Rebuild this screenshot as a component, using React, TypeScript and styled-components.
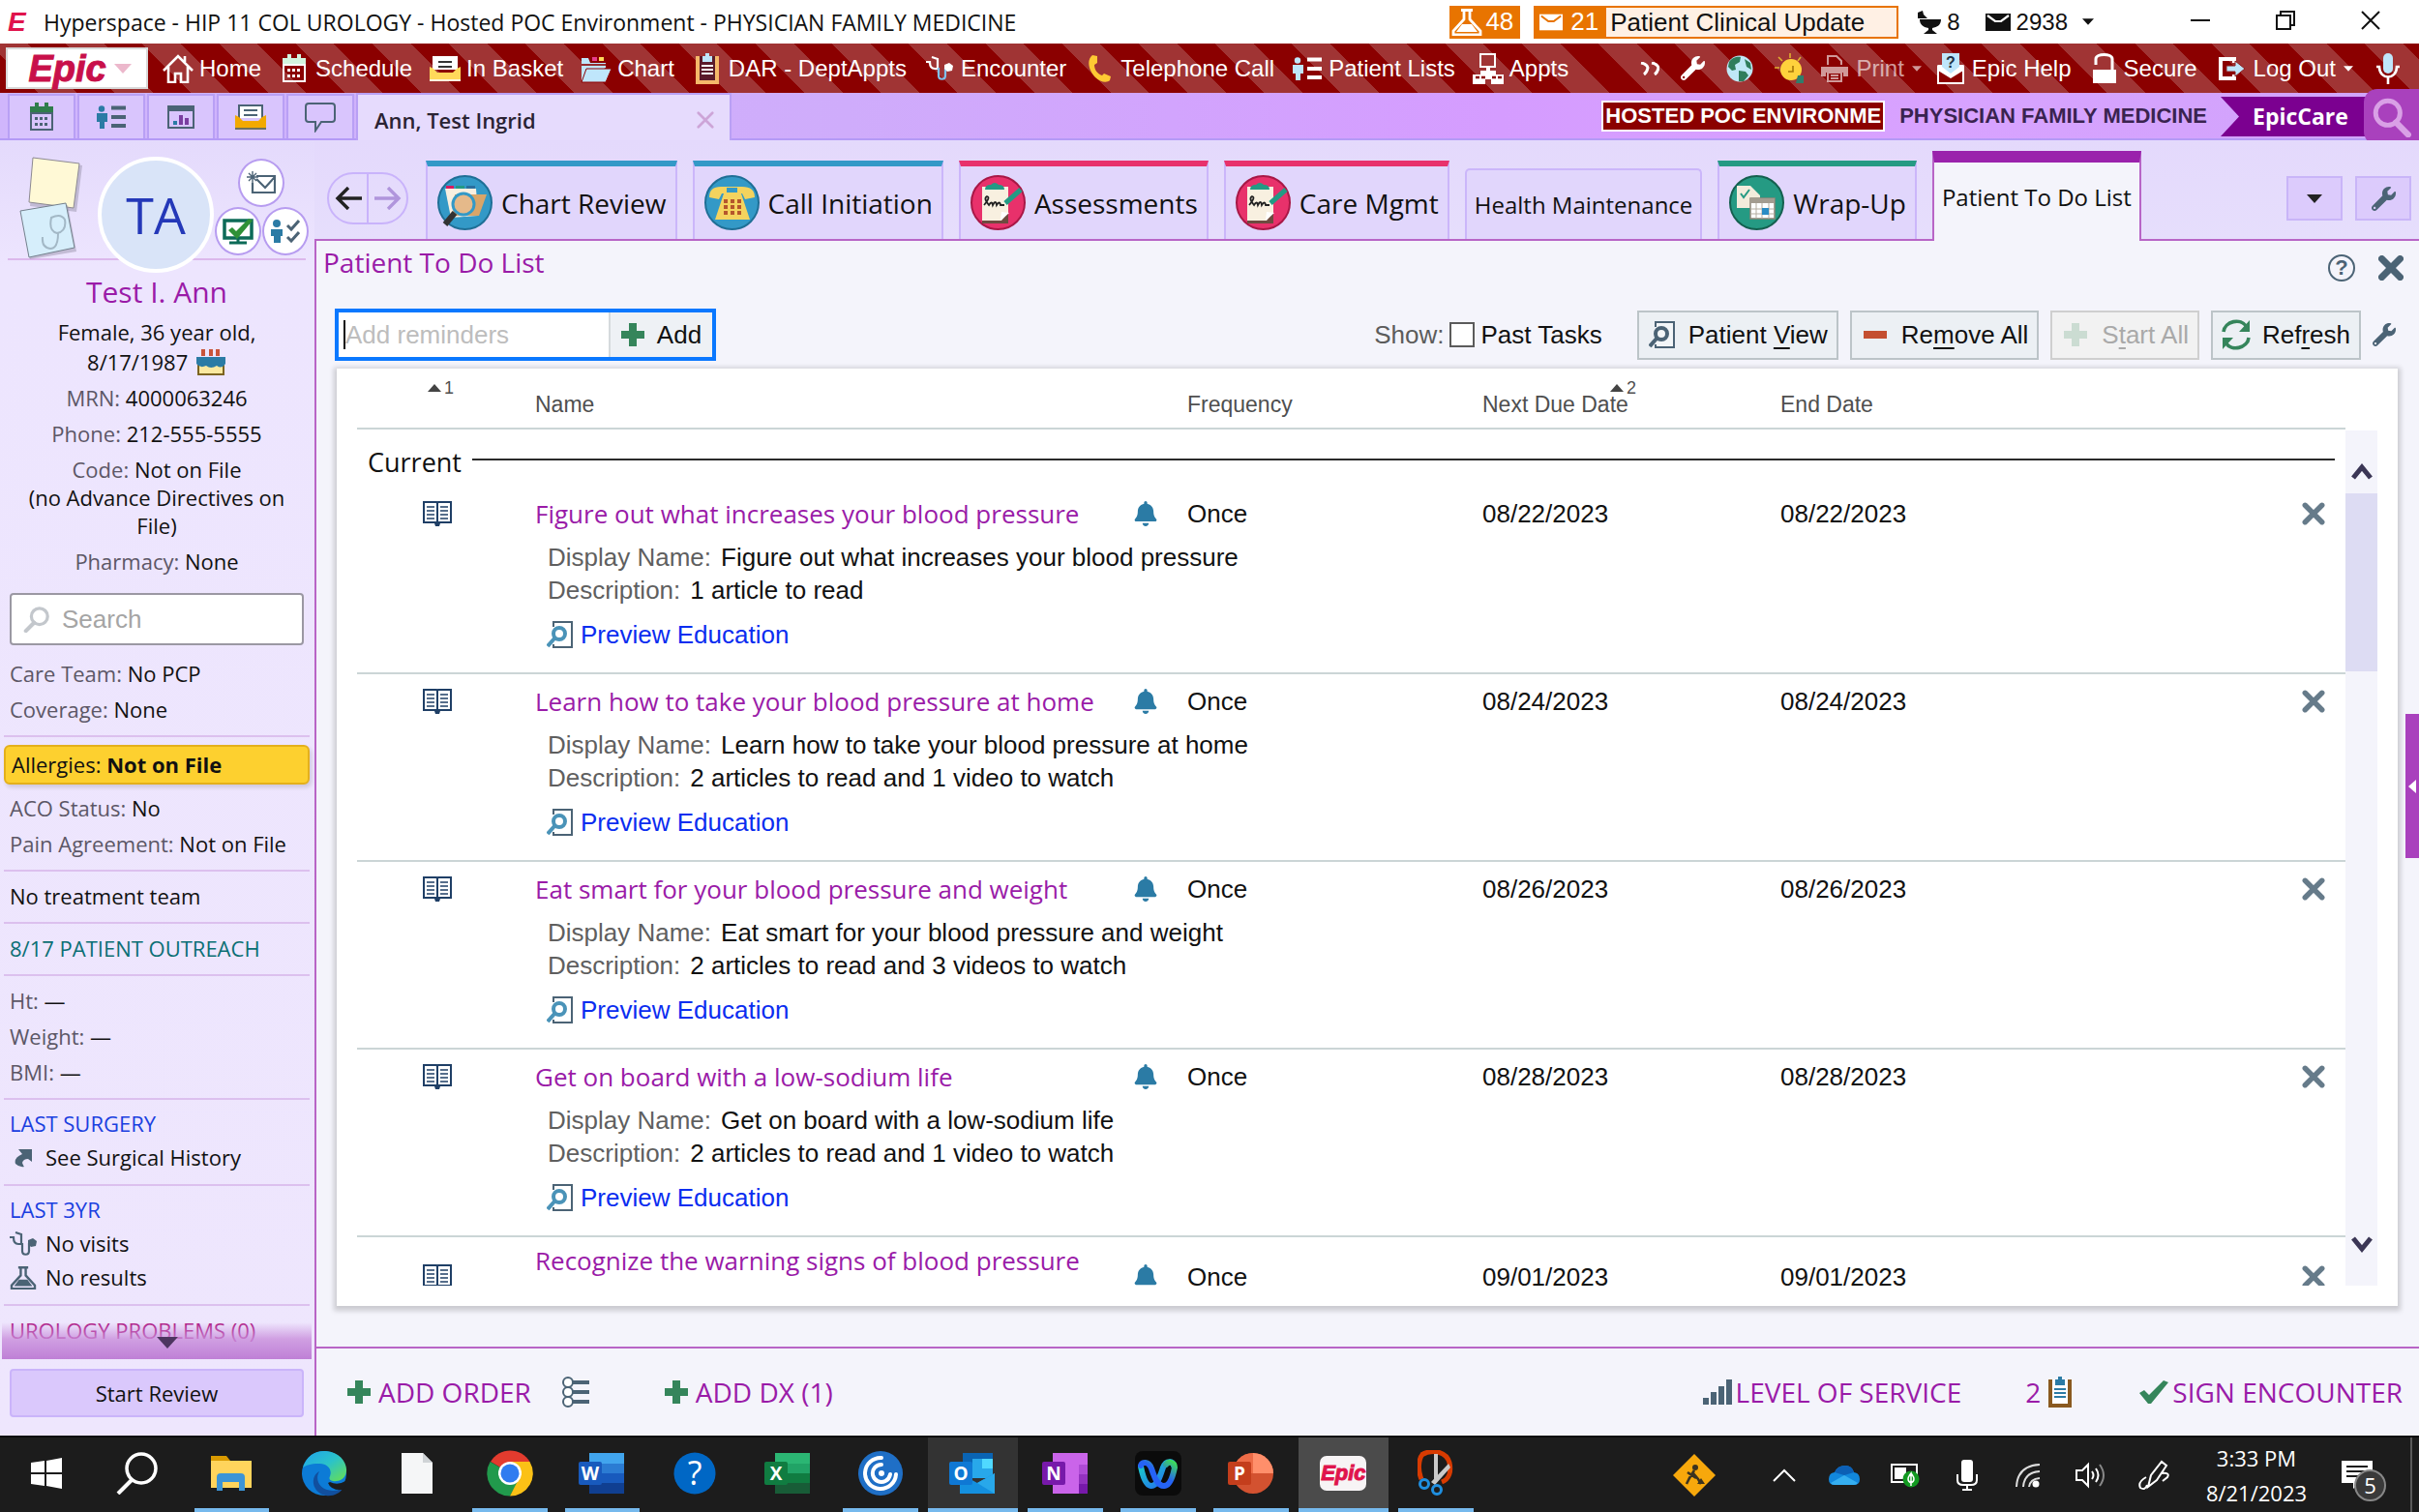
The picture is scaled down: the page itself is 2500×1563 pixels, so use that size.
import React from "react";
import styled, { createGlobalStyle, css } from "styled-components";
import { FaWrench, FaBell } from "react-icons/fa";

const SANS = `"Open Sans", "Noto Sans", sans-serif`;
const ARIAL = `"Liberation Sans", Arial, sans-serif`;
const PURPLE = "#9a1ba8";
const LINE = "#b865c6";
const SLATE = "#4b6375";
const GREEN = "#35855b";

const GlobalStyle = createGlobalStyle`
  *, *::before, *::after { box-sizing: border-box; }
  body { margin: 0; font-family: ${SANS}; color: #111; overflow: hidden; }
  button { font: inherit; color: inherit; margin: 0; padding: 0; border: 0; background: none; }
  input { font: inherit; margin: 0; }
  a { text-decoration: none; color: inherit; }
  svg { display: block; flex: none; }
`;

/* ---------- icons ---------- */

type IconProps = { w: number; h?: number; box?: string; children?: React.ReactNode };
const Icon = ({ w, h = w, box, children }: IconProps) => (
  <svg width={w} height={h} viewBox={box || `0 0 ${w} ${h}`} fill="none" aria-hidden="true">
    {children}
  </svg>
);

const CalendarIcon = ({ c, top }: { c: string; top: string }) => (
  <Icon w={24} h={30}>
    <path d="M5 0h4v4h6V0h4v4h5v8H0V4h5z" fill={top} />
    <path d="M1 11h22v17H1z" stroke={c} strokeWidth="2" />
    <path d="M5 15h3v3H5zM10 15h3v3h-3zM15 15h3v3h-3zM5 21h3v3H5zM10 21h3v3h-3zM15 21h3v3h-3z" fill={c} />
  </Icon>
);
const HomeIcon = () => (
  <Icon w={32} h={30}>
    <path d="M1 17 16 2l15 15M6 13v16h7v-9h6v9h7V13M23 8V2" stroke="#fff" strokeWidth="2.6" />
  </Icon>
);
const InBasketIcon = ({ tray, line, w = 32 }: { tray: string; line: string; w?: number }) => (
  <Icon w={w} h={26} box="0 0 32 26">
    <path d="M4 14V1h24v13" fill="#fff" stroke={line} strokeWidth="2" />
    <path d="M9 6h14M9 11h14" stroke={line === "#fff" ? "#333" : line} strokeWidth="2" />
    <path d="M0 11l4 2 4 4h16l4-4 4-2v15H0z" fill={tray} />
    <path d="M0 25h32" stroke={line} strokeWidth="1.6" />
  </Icon>
);
const FolderIcon = () => (
  <Icon w={32} h={30}>
    <path d="M1 28V4h7l2 5h16v5" fill="#bfe6fb" />
    <path d="M12 3h5v4h-5z" fill="#e83e8c" /><path d="M19 3h5v4h-5z" fill="#ffd95a" />
    <path d="M1 11h25" stroke="#8b0000" strokeWidth="1.6" />
    <path d="M6 15h26l-6 14H1z" fill="#bfe6fb" stroke="#8b0000" strokeWidth="1" />
  </Icon>
);
const ClipIcon = ({ frame, clip, line, paper }: { frame: string; clip: string; line: string; paper: string }) => (
  <Icon w={24} h={32}>
    <path d="M2 3v27h20V3" fill={paper} stroke={frame} strokeWidth="4" />
    <path d="M7 3h3V0h4v3h3v6H7z" fill={clip} />
    <path d="M6 13h12M6 17h12M6 21h12" stroke={line} strokeWidth="2" />
  </Icon>
);
const StethIcon = ({ a, b }: { a: string; b: string }) => (
  <Icon w={28} h={26}>
    <path d="M0 6h4c0 5 2 7 5 7h4M6 1l6 2v10" stroke={a} strokeWidth="2.2" />
    <path d="M13 12v8c0 5 7 5 7 0v-8" stroke={b} strokeWidth="2.2" />
    <path d="M19 9l5-2 4 3-1 5-5 1-3-3z" fill={a} />
  </Icon>
);
const PhoneIcon = () => (
  <Icon w={24} h={28}>
    <path d="M5 0l5 1v7l-3 2c0 5 3 9 8 11l2-2 7 3-1 4c-3 3-10 2-15-3C2 17-2 6 5 0z" fill="#ffc933" />
  </Icon>
);
const PeopleListIcon = ({ a, b }: { a: string; b: string }) => (
  <Icon w={30} h={24}>
    <circle cx="5" cy="3.5" r="3.2" fill={a} />
    <path d="M0 8h11v9H8v7H3v-7H0z" fill={a} />
    <path d="M15 2.500h15M15 12h15M15 21h15" stroke={b} strokeWidth="4" />
  </Icon>
);
const ApptsIcon = () => (
  <Icon w={32} h={32}>
    <path d="M8 1h15v13H8z" stroke="#fff" strokeWidth="2" />
    <path d="M14 14h4v4h-4zM8 18h16v4h8v10H19v-5h-6v5H0V22h8z" fill="#fff" />
    <path d="M3 25h4M9 25h4M20 25h4M26 25h4" stroke="#8b0000" strokeWidth="2.5" />
  </Icon>
);
const ChevronsIcon = () => (
  <Icon w={20} h={14}>
    <path d="M1 1q6 1 7 5-1 5-4 7M12 1q6 1 7 5-1 5-4 7" stroke="#fff" strokeWidth="3" />
  </Icon>
);
const GlobeIcon = () => (
  <Icon w={28}>
    <circle cx="14" cy="14" r="13.500" fill="#bfe8f6" />
    <path d="M3 7c3-5 9-6 12-5l-1 5-5 3 1 5-4 1-4-4zM13 16l7 1 3 4-5 6h-5zM19 4l6 4 1 7-5-3z" fill="#2f7d5b" />
  </Icon>
);
const SunIcon = () => (
  <Icon w={32}>
    <path d="M4 4l4 4M16 0v5M27 4l-3 4M0 15h5" stroke="#e0b030" strokeWidth="1.600" />
    <circle cx="17" cy="17" r="11" fill="#ffd23c" />
    <path d="M19 13v6h-5" stroke="#a57608" strokeWidth="1.600" />
    <path d="M24 23h6v8h-8z" fill="#2f7d6b" />
  </Icon>
);
const PrinterIcon = () => (
  <Icon w={28} h={28}>
    <path d="M7 10V1h9l5 5v4" stroke="#fff" strokeWidth="2" />
    <path d="M0 12h28v10h-5v-4H5v4H0z" fill="#fff" />
    <path d="M7 18h14v9H7zM10 21h8M10 24h8" stroke="#fff" strokeWidth="2" />
  </Icon>
);
const HelpMailIcon = () => (
  <Icon w={28} h={32}>
    <path d="M1 14v17h26V14L14 24z" stroke="#fff" strokeWidth="2" fill="#8b0000" />
    <path d="M1 12h26v6l-13 8-13-8z" fill="#fff" />
    <path d="M5 0h18v14l-9 7-9-7z" fill="#bfe6fb" />
    <text x="14" y="15" textAnchor="middle" fontSize="16" fontWeight="700" fill="#234" fontFamily="Liberation Sans">?</text>
  </Icon>
);
const LockIcon = () => (
  <Icon w={24} h={32}>
    <path d="M3 12V6c0-6 17-6 17 0v12" stroke="#fff" strokeWidth="3" />
    <path d="M0 17h24v14H0z" fill="#fff" />
  </Icon>
);
const LogOutIcon = () => (
  <Icon w={28} h={24}>
    <path d="M16 6V2H2v20h14v-4" stroke="#fff" strokeWidth="4" />
    <path d="M8 9h9V4l10 8-10 8v-5H8z" fill="#bfe6fb" stroke="#8b2020" />
  </Icon>
);
const MicIcon = () => (
  <Icon w={28} h={32}>
    <rect x="9" y="0" width="10" height="21" rx="5" fill="#bfe6fb" />
    <path d="M2 14h3c0 14 18 14 18 0h3M14 25v7" stroke="#fff" strokeWidth="2.600" />
  </Icon>
);
const FlaskIcon = ({ c, w = 32 }: { c: string; w?: number }) => (
  <Icon w={w} h={w - 4} box="0 0 32 28">
    <path d="M10 1.500h12M13 2v9L2 23v4h28v-4L19 11V2" stroke={c} strokeWidth="2.800" />
    <path d="M11 16h10l6 8H5z" fill={c} />
  </Icon>
);
const MailIcon = ({ c, hole, w = 26 }: { c: string; hole: string; w?: number }) => (
  <Icon w={w} h={18} box="0 0 26 18">
    <path d="M0 0h26v18H0z" fill={c} />
    <path d="M2 2l8 6h6l8-6" stroke={hole} strokeWidth="2.200" />
  </Icon>
);
const GobletIcon = () => (
  <Icon w={24} h={24}>
    <path d="M0 2l5-2 1 4 4 4H0z" fill="#111" />
    <path d="M2 9h22c0 6-4 8-9 9v2l5 4H6l5-4v-2c-6-1-9-4-9-9z" fill="#111" />
  </Icon>
);
const ReportIcon = () => (
  <Icon w={28} h={24}>
    <path d="M1 1h26v22H1z" stroke={SLATE} strokeWidth="2" />
    <path d="M0 0h28v6H0z" fill={SLATE} />
    <path d="M8 20v-4" stroke="#2b7ba5" strokeWidth="4" /><path d="M14 20v-10" stroke="#7a3fa0" strokeWidth="4" /><path d="M20 20v-7" stroke="#7a3fa0" strokeWidth="4" />
  </Icon>
);
const ChatIcon = () => (
  <Icon w={32} h={32}>
    <path d="M4 2h24q3 0 3 3v13q0 3-3 3H17l-6 9v-9H4q-3 0-3-3V5q0-3 3-3z" stroke={SLATE} strokeWidth="2" />
  </Icon>
);
const Cross = ({ c, w = 22, s = 5 }: { c: string; w?: number; s?: number }) => (
  <Icon w={w} box="0 0 22 22">
    <path d="M3 3l16 16M19 3L3 19" stroke={c} strokeWidth={s} strokeLinecap="round" />
  </Icon>
);
const Plus = ({ c = GREEN }: { c?: string }) => (
  <Icon w={24}><path d="M8 0h8v8h8v8h-8v8H8v-8H0V8h8z" fill={c} /></Icon>
);
const Caret = ({ c, w = 12 }: { c: string; w?: number }) => (
  <Icon w={w} h={Math.round(w * 0.55)} box="0 0 20 11"><path d="M0 0h20L10 11z" fill={c} /></Icon>
);
const SortArrow = () => (
  <Icon w={14} h={8}><path d="M0 8L7 0l7 8z" fill="#444" /></Icon>
);
const Magnifier = ({ c, w, flip }: { c: string; w: number; flip?: boolean }) => (
  <Icon w={w} box="0 0 30 30">
    <g transform={flip ? "translate(30 0) scale(-1 1)" : undefined}>
      <circle cx="12" cy="12" r="9" stroke={c} strokeWidth="3.500" />
      <path d="M18 19l9 9" stroke={c} strokeWidth="4.500" strokeLinecap="round" />
    </g>
  </Icon>
);
const PreviewIcon = ({ lens }: { lens: string }) => (
  <Icon w={28}>
    <path d="M7 6V1h19v26H7v-3" stroke={SLATE} strokeWidth="2" fill="#fff" fillOpacity=".4" />
    <circle cx="13" cy="13" r="6" stroke={lens} strokeWidth="4" />
    <path d="M8 18l-7 8" stroke={lens} strokeWidth="4" />
  </Icon>
);
const BookIcon = () => (
  <Icon w={30} h={26}>
    <path d="M1 1h13l1 1 1-1h13v21H1zM15 2v20" stroke="#1f3f66" strokeWidth="2" />
    <path d="M4 6h8M4 10h8M4 14h8M4 18h8M18 6h8M18 10h8M18 14h8M18 18h8" stroke="#1f3f66" strokeWidth="1.600" />
    <path d="M0 21h30v2H18l-1 3h-4l-1-3H0z" fill="#1f3f66" />
  </Icon>
);
const RefreshIcon = () => (
  <Icon w={30} h={32}>
    <path d="M2 13C3 2 20-2 26 8M28 19c-1 11-18 15-24 5" stroke={GREEN} strokeWidth="3.600" />
    <path d="M29 1v12H18zM1 31V19h11z" fill={GREEN} />
  </Icon>
);
const OrdersIcon = () => (
  <Icon w={28} h={32}>
    <path d="M10 6h18M10 16h18M10 26h18" stroke={SLATE} strokeWidth="4" />
    <g fill="#fff" stroke={SLATE} strokeWidth="2"><circle cx="6" cy="6" r="5" /><circle cx="6" cy="16" r="5" /><circle cx="6" cy="26" r="5" /></g>
  </Icon>
);
const BarsIcon = () => (
  <Icon w={30} h={26}>
    <path d="M3 26v-7M11 26V13M19 26V7M27 26V0" stroke={SLATE} strokeWidth="6" />
  </Icon>
);
const CheckIcon = () => (
  <Icon w={30} h={24}><path d="M0 13l5-3 5 5L25 0l5 2-18 22H9z" fill={GREEN} /></Icon>
);
const CakeIcon = () => (
  <Icon w={32} h={30}>
    <path d="M8 2v7M16 2v7M23 2v7" stroke="#c9543a" strokeWidth="4" />
    <path d="M3 16h26v12H3z" fill="#fbe9a0" stroke="#7c6420" strokeWidth="2" />
    <path d="M1 10h30v7q-4 6-9 2-6 4-11 0-6 3-10-2z" fill="#2b7ba5" />
  </Icon>
);
const ShortcutIcon = () => (
  <Icon w={18} h={20}><path d="M4 1h14v13l-4-3q-5 0-6 4 1 3 2 4-5 1-9-3-2-6 7-10z" fill={SLATE} /></Icon>
);
const NewMailIcon = () => (
  <Icon w={30} h={24}>
    <path d="M10 5h19v17H6V12M10 8l9 9 10-11" stroke={SLATE} strokeWidth="2.200" />
    <path d="M0 6h12M6 0v12M2 2l8 8M10 2l-8 8" stroke={SLATE} strokeWidth="1.400" />
  </Icon>
);
const MonitorIcon = () => (
  <Icon w={32} h={28}>
    <path d="M2 3h28v18H2z" stroke="#0d6b57" strokeWidth="3.500" /><path d="M16 21v5M7 26h18" stroke="#0d6b57" strokeWidth="3" />
    <path d="M6 13l4-3 4 4L27 1l4 2-16 19z" fill="#2f9137" />
  </Icon>
);
const PatientChecksIcon = () => (
  <Icon w={30} h={24}>
    <circle cx="6" cy="4" r="4" fill="#2b7ba5" /><path d="M0 10h12v7h-2v7H3v-7H0z" fill="#2b7ba5" />
    <path d="M17 6l4 4 8-9M17 18l4 4 8-9" stroke={SLATE} strokeWidth="3" />
  </Icon>
);
const NotesIcon = () => (
  <Icon w={68} h={112}>
    <path d="M16 3l49 6-6 48-48-6z" fill="#9993ab" opacity=".5" />
    <path d="M14 1l48 6-6 46-46-6z" fill="#fff9d6" stroke="#8d8a92" />
    <path d="M2 58l48-8 9 48-48 8z" fill="#9993ab" opacity=".5" />
    <path d="M1 56l47-8 9 46-47 10z" fill="#d6eefb" stroke="#73808c" />
    <path d="M33 63q10-5 14 2 2 12-8 14-9-2-6-16zM40 79q0 16-8 16-9-1-8-12" stroke="#a3b8c6" strokeWidth="2" />
  </Icon>
);

const Disc = ({ bg, ring, children }: { bg: string; ring: string; children: React.ReactNode }) => (
  <Icon w={57}><circle cx="28.500" cy="28.500" r="27.500" fill={bg} stroke={ring} strokeWidth="2" />{children}</Icon>
);
const ChartDisc = () => (
  <Disc bg="#3399c7" ring="#1f6f96">
    <path d="M9 11h8v5H9z" fill="#d81b60" /><path d="M19 11h9v5h-9z" fill="#239a84" /><path d="M30 11h9v5h-9z" fill="#2b6f9e" />
    <path d="M8 14h32l2 28-28 2z" fill="#f8efe0" /><path d="M18 20h33l-8 22H16z" fill="#d9a569" />
    <circle cx="27" cy="30" r="11" fill="#e5b98a" stroke="#3399c7" strokeWidth="3" /><path d="M18 39L8 51" stroke="#333" strokeWidth="6" />
  </Disc>
);
const CallDisc = () => (
  <Disc bg="#3399c7" ring="#1f6f96">
    <path d="M5 23q0-11 12-11h22q13 0 13 11l-10 2-3-6H18l-3 6z" fill="#f4d35e" />
    <path d="M20 19h18l9 27H11z" fill="#f4d35e" /><path d="M23 13h11v5H23z" fill="#3399c7" />
    <g fill="#b5562c"><path d="M20 25h4v4h-4zM27 25h4v4h-4zM34 25h4v4h-4zM20 31h4v4h-4zM27 31h4v4h-4zM34 31h4v4h-4zM20 37h4v4h-4zM27 37h4v4h-4zM34 37h4v4h-4z" /></g>
  </Disc>
);
const AssessDisc = () => (
  <Disc bg="#e8316b" ring="#a81846">
    <path d="M12 12h27v37H12z" fill="#f8f0e0" /><path d="M12 47h20l7-8v11H12z" fill="#6d4b40" />
    <path d="M15 15q0-5 6-5 4-4 8 0 6 0 6 5z" fill="#239a84" />
    <path d="M14 31q7-8 3-9-4 2 2 9 3-5 4 0 3-6 4 0 3-5 4 0h4" stroke="#222" strokeWidth="1.800" />
    <path d="M36 29L52 15" stroke="#239a84" strokeWidth="5" /><path d="M31 47l1-9 8 1z" fill="#fff" />
  </Disc>
);
const WrapDisc = () => (
  <Disc bg="#259a83" ring="#14604f">
    <path d="M8 11h14l10 10v13H8z" fill="#f3ecdc" /><path d="M12 19l3 4 6-8" stroke="#259a83" strokeWidth="2" />
    <path d="M22 24h25v21H22z" fill="#fff" stroke="#8d8578" strokeWidth="1.500" /><path d="M22 24h25v5H22z" fill="#a39c90" />
    <path d="M22 35h25M22 40h25M28 29v16M34 29v16M41 29v16" stroke="#b3aca0" /><path d="M34 34h7v7h-7z" fill="#2b8cc4" />
  </Disc>
);

/* ---------- title bar ---------- */

const Shell = styled.div`
  height: 100vh; display: flex; flex-direction: column; background: #ece4fd;
`;
const TitleBar = styled.header`
  flex: none; height: 45px; background: #fff; display: flex; align-items: center;
  padding-left: 8px; font-size: 23px; white-space: nowrap;
`;
const EMark = styled.span`
  width: 37px; color: #e0144c; font: italic 900 28px ${ARIAL};
`;
const Grow = styled.div`flex: 1;`;
const Badge = styled.div`
  height: 34px; display: flex; align-items: center; gap: 3px; padding: 0 7px 0 2px; margin-right: 14px;
  background: #e87400; color: #fff; font: 26px ${ARIAL};
`;
const MailBadge = styled(Badge)`padding: 0 2px 0 6px; gap: 8px; margin-right: 20px;`;
const BadgeText = styled.span`
  width: 300px; height: 30px; line-height: 30px; padding-left: 4px;
  background: #fff0e4; color: #111;
`;
const Counter = styled.div`
  display: flex; align-items: center; gap: 6px; font: 24px ${ARIAL}; margin-right: 26px;
  & + & { margin-right: 15px; }
`;
const WindowButtons = styled.div`display: flex; margin: 0 6px 0 66px;`;
const WindowButton = styled.button`
  width: 88px; height: 45px; padding-bottom: 4px; display: grid; place-items: center;
`;

/* ---------- red menu bar ---------- */

const MenuBar = styled.nav`
  flex: none; height: 51px; display: flex; align-items: center; padding: 0 18px 0 6px; color: #fff;
  font: 24px ${ARIAL}; white-space: nowrap;
  background: repeating-linear-gradient(45deg, #8b0000 0 28px, #a03434 28px 56px);
`;
const EpicButton = styled.button`
  width: 147px; height: 43px; display: flex; align-items: center; justify-content: center; gap: 8px;
  background: #fff; border: 2px solid #d9d9d9; color: #c8104a; margin-right: 15px; padding-left: 6px;
  font: italic 900 38px/36px ${ARIAL}; -webkit-text-stroke: 1px #c8104a;
`;
const MenuItem = styled.button`
  display: flex; align-items: center; gap: 6px; margin-right: 18px;
`;
const MenuIcon = styled.span`width: 32px; display: grid; place-items: center;`;
const Tools = styled.div`display: flex; align-items: center; gap: 22px; margin-left: auto;`;
const ToolItem = styled.button<{ $dim?: boolean }>`
  display: flex; align-items: center; gap: 8px;
  ${p => p.$dim && css`opacity: 0.6; margin: 0 -6px;`}
`;

/* ---------- workspace tabs ---------- */

const WorkTabs = styled.div`
  flex: none; height: 49px; display: flex; align-items: flex-end; padding-left: 8px; position: relative;
  background: linear-gradient(90deg, #d0b6fc 0%, #cfacfb 35%, #d59cff 62%, #d8a2ff 80%, #d0a4fb 100%);
  border-bottom: 2px solid #b49af6;
`;
const IconTab = styled.button`
  width: 70px; height: 46px; margin-right: 2px; display: grid; place-items: center;
  border: 2px solid #b9a0f5; border-bottom: 0; background: #d9c5fd;
`;
const PatientTab = styled.div`
  width: 388px; height: 49px; margin-bottom: -2px; display: flex; align-items: center; justify-content: space-between;
  padding: 4px 15px 0 17px; border: 2px solid #b9a0f5; border-bottom: 0; background: #e6dbfd;
  font-size: 22px; font-weight: 600; color: #2a2333;
`;
const Env = styled.span`
  align-self: center; padding: 0 2px; margin: 0 15px 0 auto;
  background: #8b0000; color: #fff; border: 2px solid #fff; font: bold 22px/28px ${ARIAL}; white-space: nowrap;
`;
const Dept = styled.span`
  align-self: center; font: bold 22px/30px ${ARIAL}; color: #3a2350; margin-right: 14px; white-space: nowrap;
`;
const Ribbon = styled.span`
  width: 205px; height: 41px; padding-left: 33px; margin-bottom: 2px; background: #7b0090; color: #fff;
  font-size: 23px; font-weight: 700; line-height: 41px;
  clip-path: polygon(0 0, 100% 0, 100% 100%, 0 100%, 19px 50%);
`;
const SearchFlag = styled.button`
  position: absolute; right: 0; top: -4px; width: 57px; height: 58px; display: grid; place-items: center;
  background: #a941bd; border-radius: 14px 0 0 14px;
`;

/* ---------- sidebar ---------- */

const Body = styled.div`flex: 1; min-height: 0; display: flex; position: relative;`;
const Sidebar = styled.aside`
  width: 325px; flex: none; display: flex; flex-direction: column; font-size: 22px; line-height: 37px;
  background: linear-gradient(180deg, #e4dafc 0, #ede5fe 130px, #eee6fd 100%);
`;
const SideScroll = styled.div`flex: 1; min-height: 0; overflow: hidden; position: relative; padding: 0 5px 0 4px;`;
const Head = styled.div`
  height: 138px; display: flex; align-items: flex-start; padding: 17px 0 0 16px; position: relative;
  &::after { content: ""; position: absolute; left: 4px; right: 4px; bottom: 14px; height: 2px; background: #dcb8ec; z-index: 0; }
  > * { z-index: 1; }
`;
const Avatar = styled.div`
  width: 120px; height: 120px; flex: none; margin-left: 13px; border-radius: 50%; border: 4px solid #fff; background: #d9e4f8;
  color: #2438b8; font-size: 52px; line-height: 112px; text-align: center;
`;
const HeadActions = styled.div`
  width: 98px; flex: none; display: flex; flex-wrap: wrap; justify-content: center; gap: 0 1px; margin-top: 2px;
`;
const RoundButton = styled.button`
  width: 48px; height: 50px; display: grid; place-items: center; border-radius: 50%;
  border: 2px solid #b79cf0; background: #fff;
  &:first-child { margin: 0 24px; }
`;
const PatientName = styled.h1`
  margin: 0 0 7px; font-size: 30px; line-height: 38px; font-weight: 400; color: ${PURPLE}; text-align: center;
`;
const Demographics = styled.div`text-align: center; padding: 0 10px;`;
const Wrapped = styled.div<{ $lh: number; $top?: number; $bottom: number }>`
  line-height: ${p => p.$lh}px; padding: ${p => p.$top || 0}px 0 ${p => p.$bottom}px;
  svg { display: inline-block; vertical-align: -6px; margin-left: 2px; }
`;
const Key = styled.span`color: #5c5766;`;
const SearchBox = styled.label`
  height: 54px; margin: 14px 6px 11px; display: flex; align-items: center; gap: 10px; padding-left: 12px;
  background: #fff; border: 2px solid #9b98a3; border-radius: 4px;
  input { border: 0; outline: 0; width: 200px; font: 26px ${ARIAL}; background: none; }
  input::placeholder { color: #a5a5a5; opacity: 1; }
`;
const Section = styled.section<{ $tight?: boolean }>`
  padding: 7px 4px 8px 6px; border-bottom: 2px solid #dcc0ee;
  ${p => p.$tight && css`line-height: 35px; padding-bottom: 10px;`}
`;
const FirstSection = styled(Section)`padding-top: 0;`;
const Allergy = styled.div`
  height: 41px; line-height: 37px; margin: 8px 0 6px; padding-left: 6px; background: #fdd02f; border: 2px solid #e4b01c;
  border-radius: 6px; box-shadow: 2px 3px 4px #0002; color: #111;
`;
const SideLink = styled.a<{ $c: string }>`display: block; color: ${p => p.$c};`;
const IconRow = styled.div`display: flex; align-items: center; gap: 9px;`;
const IconSlot = styled.span`width: 28px; display: grid; place-items: center;`;
const MoreShade = styled.button`
  position: absolute; left: 2px; right: 3px; bottom: 0; height: 38px; display: grid; place-items: center; padding: 4px 0 0 22px;
  background: linear-gradient(180deg, #e4c8f000, #c98fdcd0 45%, #bf80d6);
`;
const SideFoot = styled.div`flex: none; padding: 10px 11px 19px 10px;`;
const StartReview = styled.button`
  width: 100%; height: 50px; background: #dac8fc; border: 2px solid #cab4fa; border-radius: 4px; font-size: 22px;
`;

/* ---------- activity tabs ---------- */

const Main = styled.main`flex: 1; min-width: 0; display: flex; flex-direction: column;`;
const ActivityBar = styled.div`
  flex: none; height: 102px; display: flex; align-items: flex-end; padding-left: 13px;
  background: linear-gradient(180deg, #e4d9fc, #e6defc);
`;
const History = styled.div`
  width: 84px; height: 54px; margin: 0 18px 15px 0; display: flex; border: 2px solid #c9b3fb; border-radius: 27px; overflow: hidden;
  button { flex: 1; display: grid; place-items: center; }
  button + button { border-left: 2px solid #c9b3fb; }
`;
const Tab = styled.button<{ $bar: string }>`
  height: 81px; display: flex; align-items: center; gap: 9px; padding: 0 9px 0 10px; margin-right: 16px;
  border: 2px solid #cbb6fa; border-top: 6px solid ${p => p.$bar}; border-bottom: 0; background: #e1d6fc;
  font-size: 28px; white-space: nowrap;
`;
const PlainTab = styled.button`
  height: 73px; padding: 0 8px; margin-right: 16px; border: 2px solid #cbb6fa; border-bottom: 0; border-radius: 5px 5px 0 0;
  background: #e1d6fc; font-size: 24px; white-space: nowrap;
`;
const ActiveTab = styled.button`
  height: 93px; padding: 0 8px 10px; margin-bottom: -2px; border: 2px solid ${LINE}; border-top: 12px solid #9a22ac; border-bottom: 0;
  background: #f4f4fb; font-size: 24px; white-space: nowrap; z-index: 1;
`;
const SquareButton = styled.button`
  width: 58px; height: 46px; margin: 0 0 19px 13px; display: grid; place-items: center;
  border: 2px solid #c9b5f8; background: #dccbfc; color: ${SLATE};
  ${Grow} + & { margin-left: 0; }
  &:last-child { margin-right: 8px; }
`;

/* ---------- activity panel ---------- */

const Panel = styled.div`
  flex: 1; min-height: 0; display: flex; flex-direction: column; background: #f4f4fb;
  border: 2px solid ${LINE}; border-right: 0; border-bottom: 0;
`;
const PanelHead = styled.div`
  display: flex; align-items: center; height: 56px; padding: 0 16px 0 7px; gap: 24px; color: ${SLATE};
`;
const PanelTitle = styled.h2`margin: 0 auto 12px 0; font-size: 28px; line-height: 36px; font-weight: 400; color: ${PURPLE};`;
const HelpButton = styled.button`
  width: 28px; height: 28px; border: 2px solid ${SLATE}; border-radius: 50%; font: bold 22px/22px ${ARIAL};
`;
const Toolbar = styled.div`
  display: flex; align-items: center; padding: 14px 24px 0 19px; font: 26px ${ARIAL}; gap: 12px; white-space: nowrap;
`;
const AddBox = styled.div`
  width: 394px; height: 54px; display: flex; align-items: center; border: 4px solid #0a78ff; background: #fff; margin-right: auto;
  input { flex: 1; min-width: 0; border: 0; outline: 0; padding: 0; }
  input::placeholder { color: #bdbdbd; opacity: 1; }
`;
const TextCursor = styled.span`width: 2px; height: 30px; background: #111; margin-left: 5px;`;
const AddButton = styled.button`
  width: 107px; height: 100%; display: flex; align-items: center; justify-content: center; gap: 13px;
  background: #eef1f5; border-left: 2px solid #d5dadd;
`;
const ShowFilter = styled.label`
  display: flex; align-items: center; gap: 6px; margin-right: 24px;
  span { color: #5c5c5c; }
  input { appearance: none; width: 26px; height: 26px; border: 2px solid #5b5b5b; background: #fff; }
`;
const ToolButton = styled.button<{ $off?: boolean }>`
  height: 51px; display: flex; align-items: center; gap: 12px; padding: 0 9px; border: 2px solid ${p => (p.$off ? "#cfcfcf" : "#bcc4c8")};
  background: ${p => (p.$off ? "#f2f2f2" : "#ecf0f4")}; color: ${p => (p.$off ? "#a9a9a9" : "#111")};
  u { text-underline-offset: 4px; text-decoration-thickness: 2px; }
`;
const ToolSlot = styled.span`width: 30px; display: grid; place-items: center;`;
const Bare = styled.button`color: ${SLATE}; display: grid; place-items: center;`;

const Card = styled.section`
  flex: 1; min-height: 0; display: flex; margin: 8px 22px 42px 21px; padding: 0 21px 21px; background: #fff;
  box-shadow: 0 2px 5px 3px #0000002b;
`;
const TableClip = styled.div`flex: 1; min-width: 0; overflow: hidden;`;
const Tasks = styled.table`
  width: 100%; table-layout: fixed; border-collapse: separate; border-spacing: 0; font: 26px/34px ${ARIAL};
  th, td { padding: 0; text-align: left; font-weight: 400; }
`;
const HeadCell = styled.th<{ $w?: number }>`
  ${p => p.$w && css`width: ${p.$w}px;`}
  height: 63px; vertical-align: bottom; border-bottom: 2px solid #cbd5d6; color: #4f4f4f; font-size: 23px; line-height: 26px;
`;
const HeadText = styled.div`height: 37px; position: relative;`;
const SortMark = styled.span<{ $x: number }>`
  position: absolute; left: ${p => p.$x}px; top: -15px; display: flex; align-items: center; gap: 3px;
  font-size: 18px; line-height: 22px;
`;
const GroupLabel = styled.div`
  height: 59px; display: flex; align-items: center; gap: 11px; padding: 7px 11px 0; font: 27px ${SANS};
  &::after { content: ""; flex: 1; height: 2px; background: #2b2b2b; margin-bottom: 4px; }
`;
const MainRow = styled.tr<{ $tall?: boolean }>`
  td { height: ${p => (p.$tall ? 82 : 56)}px; vertical-align: middle; }
  td:first-child svg { margin-left: 68px; }
  td:last-child button { margin-left: 9px; }
`;
const TaskLink = styled.a`
  display: block; color: ${PURPLE}; font: 26px/34px ${SANS}; white-space: nowrap;
`;
const BellCell = styled.td`color: #2b7ba5; svg { margin-left: 7px; }`;
const DetailCell = styled.td`
  height: 138px; vertical-align: top; border-bottom: 2px solid #cbd5d6;
`;
const DetailLine = styled.div`
  padding-left: 13px; white-space: nowrap;
  span { color: #5f5f5f; margin-right: 10px; }
`;
const Preview = styled.a`
  display: inline-flex; align-items: center; gap: 7px; margin: 12px 0 0 12px; color: #0a2df0;
`;
const Scrollbar = styled.div`
  width: 33px; margin-top: 64px; background: #f4f4fb; display: flex; flex-direction: column; align-items: center;
`;
const ScrollArrow = styled.button`
  height: 65px; padding-top: 18px; display: grid; place-items: center;
  &:last-child { padding: 0 0 20px; }
`;
const Thumb = styled.div`width: 100%; height: 184px; background: #dddcf3;`;

const Actions = styled.footer`
  flex: none; height: 92px; display: flex; align-items: center; padding: 0 17px 0 32px; border-top: 2px solid ${LINE};
  font-size: 28px; font-weight: 500; color: ${PURPLE};
`;
const Action = styled.button<{ $mr?: number; $snug?: boolean }>`
  display: flex; align-items: center; gap: ${p => (p.$snug ? 4 : 8)}px; white-space: nowrap; margin-right: ${p => p.$mr || 0}px;
`;
const Drawer = styled.button`
  position: absolute; right: 0; top: 593px; width: 14px; height: 149px; background: #a941bd;
  display: grid; place-items: center;
`;

/* ---------- taskbar ---------- */

const Taskbar = styled.footer`
  flex: none; height: 79px; display: flex; background: #1c1c1c; border-top: 2px solid #0c0c0c; color: #fff;
`;
const Apps = styled.div`width: 1532px; display: grid; grid-template-columns: repeat(16, 1fr);`;
const AppButton = styled.button<{ $open?: boolean; $bg?: string }>`
  position: relative; display: grid; place-items: center; margin: 0 1px; padding-bottom: 3px; background: ${p => p.$bg || "none"};
  ${p => p.$open && css`
    &::after { content: ""; position: absolute; bottom: 0; left: ${p.$bg ? 0 : 8}px; right: ${p.$bg ? 0 : 8}px; height: 4px; background: #76b9ed; }
  `}
`;
const EpicTile = styled.span`
  width: 48px; height: 36px; display: grid; place-items: center; background: #f7f4f5; border-radius: 7px; color: #e0144c;
  font: italic 900 22px ${ARIAL}; -webkit-text-stroke: 1px #e0144c;
`;
const Tray = styled.div`margin-left: auto; display: flex; align-items: center;`;
const TrayItem = styled.button<{ $w: number }>`width: ${p => p.$w}px; display: grid; place-items: center;`;
const Clock = styled.div`width: 146px; margin-right: 7px; text-align: center; font-size: 22px; line-height: 36px;`;
const Notify = styled.button`
  width: 70px; height: 60px; position: relative; padding-left: 8px; margin-right: 9px;
  span { position: absolute; left: 21px; top: 24px; width: 33px; height: 33px; border-radius: 50%; background: #3a3a3a; border: 2px solid #888; font-size: 22px; line-height: 28px; }
`;
const ShowDesktop = styled.div`width: 9px; align-self: stretch; border-left: 2px solid #5b5b5b;`;

const Letter = ({ children }: { children: string }) => (
  <text x="12" y="28" textAnchor="middle" fontSize="19" fontWeight="700" fill="#fff" fontFamily="Open Sans">{children}</text>
);
const Office = ({ letter, dark, tones }: { letter: string; dark: string; tones: string[] }) => (
  <Icon w={48} h={42}>
    <rect x="11" y="0" width="36" height="11" fill={tones[0]} />
    <rect x="11" y="11" width="36" height="10" fill={tones[1]} />
    <rect x="11" y="21" width="36" height="10" fill={tones[2]} />
    <rect x="11" y="31" width="36" height="11" fill={tones[3]} />
    <rect x="0" y="9" width="24" height="24" rx="2" fill={dark} />
    <Letter>{letter}</Letter>
  </Icon>
);

const apps: { name: string; open?: boolean; bg?: string; icon: React.ReactNode }[] = [
  { name: "Start", icon: <Icon w={32} h={32}><path d="M0 5l14-2v12H0zM16 3l16-3v15H16zM0 17h14v12L0 27zM16 17h16v15l-16-3z" fill="#fff" /></Icon> },
  { name: "Search", icon: <Icon w={48} h={44}><circle cx="26" cy="17" r="15" stroke="#fff" strokeWidth="3.500" /><path d="M16 29L2 43" stroke="#fff" strokeWidth="4" /></Icon> },
  { name: "File Explorer", open: true, icon: <Icon w={42} h={36}><path d="M0 0h16l4 5H0z" fill="#d99a00" /><path d="M0 5h42v28H0z" fill="#ffd45c" /><path d="M6 36V22q0-4 4-4h21q4 0 4 4v14h-6v-9H12v9z" fill="#3c94d6" /></Icon> },
  { name: "Edge", icon: (
    <Icon w={48}>
      <defs><linearGradient id="eg" x1="0" y1="0" x2="1" y2="1"><stop offset="0" stopColor="#1fa2ec" /><stop offset=".5" stopColor="#2bc3c9" /><stop offset="1" stopColor="#6be04b" /></linearGradient></defs>
      <circle cx="24" cy="24" r="23" fill="#0c7bd6" />
      <path d="M2 18C6 5 16 0 26 1c14 1 22 12 21 21-1 8-8 11-14 10-4-1-4-3-3-5 3-8-4-14-12-13-8 0-13 2-16 4z" fill="url(#eg)" />
      <path d="M19 22c-5 8 0 20 14 20 5 0 8-1 11-3-4 6-11 9-18 8-15-3-17-20-7-25z" fill="#114f9e" />
      <path d="M30 33q8 4 16-1l2 4-5 5q-12 1-15-7z" fill="#1c1c1c" />
    </Icon>) },
  { name: "Document", icon: <Icon w={32} h={42}><path d="M0 0h22l10 10v32H0z" fill="#f5f6f7" /><path d="M22 0v10h10z" fill="#cfd3d6" /></Icon> },
  { name: "Chrome", open: true, icon: (
    <Icon w={48}>
      <path d="M24 24L4 12A23.500 23.500 0 0 1 44.500 12z" fill="#e33b2e" /><path d="M24 24L3.600 12A23.500 23.500 0 0 0 24 47.500L34 30z" fill="#219a4c" />
      <path d="M24 24l20.500-12A23.500 23.500 0 0 1 24 47.500L34 28z" fill="#fbc116" /><path d="M24 12h20.500L34 30z" fill="#fbc116" />
      <circle cx="24" cy="24" r="12" fill="#fff" /><circle cx="24" cy="24" r="9.500" fill="#2f7cf0" />
    </Icon>) },
  { name: "Word", open: true, icon: <Office letter="W" dark="#185abd" tones={["#41a5ee", "#2b7cd3", "#185abd", "#103f91"]} /> },
  { name: "Get Help", icon: <Icon w={44}><circle cx="22" cy="22" r="21.500" fill="#0067c5" /><text x="22" y="34" textAnchor="middle" fontSize="34" fill="#fff" fontFamily="Open Sans">?</text></Icon> },
  { name: "Excel", icon: <Office letter="X" dark="#107c41" tones={["#2bb673", "#21a366", "#107c41", "#185c37"]} /> },
  { name: "Citrix Workspace", open: true, icon: <Icon w={46}><circle cx="23" cy="23" r="23" fill="#1f6fc6" /><g stroke="#fff" strokeWidth="4" strokeLinecap="round"><path d="M24 7a16 16 0 1 0 15 17M24 14a9 9 0 1 0 4 17q4-2 5-7" /></g><circle cx="24" cy="23" r="3" fill="#fff" /></Icon> },
  { name: "Outlook", open: true, bg: "#333", icon: (
    <Icon w={48} h={42}><path d="M14 0h31v26H14z" fill="#0a64b4" /><path d="M24 6h21v20H24z" fill="#28a8ea" /><path d="M34 6h11v10H34z" fill="#50d9ff" /><path d="M11 21l18 10 18-10v21H11z" fill="#1490df" /><path d="M29 31l18-10v21z" fill="#28a8ea" /><rect y="9" width="24" height="24" rx="2" fill="#0f78d4" /><Letter>O</Letter></Icon>) },
  { name: "OneNote", open: true, icon: <Icon w={48} h={42}><path d="M11 0h27v42H11z" fill="#ca64ea" /><path d="M38 0h9v12h-9z" fill="#ca64ea" /><path d="M38 12h9v10h-9z" fill="#ae4bd5" /><path d="M38 22h9v10h-9z" fill="#9332bf" /><path d="M38 32h9v10h-9z" fill="#7719aa" /><rect y="9" width="24" height="24" rx="2" fill="#7719aa" /><Letter>N</Letter></Icon> },
  { name: "Webex", open: true, icon: (
    <Icon w={48} h={46}>
      <defs>
        <linearGradient id="wl" x1="0" y1="0" x2="1" y2="1"><stop offset="0" stopColor="#19d3c5" /><stop offset="1" stopColor="#2563f5" /></linearGradient>
        <linearGradient id="wr" x1="1" y1="0" x2="0" y2="1"><stop offset="0" stopColor="#3ddc5a" /><stop offset=".45" stopColor="#2563f5" /><stop offset="1" stopColor="#2563f5" /></linearGradient>
      </defs>
      <rect width="48" height="46" rx="8" fill="#0b0b0b" />
      <path d="M40 15c0-5-8-6-11 2-3 9-6 19-12 19S8 26 6 16" stroke="url(#wl)" strokeWidth="6" strokeLinecap="round" />
      <path d="M6 15c1-4 8-5 11 3 3 9 6 18 13 18 6 0 9-9 11-19 0-5-6-7-9-3" stroke="url(#wr)" strokeWidth="6" strokeLinecap="round" />
    </Icon>) },
  { name: "PowerPoint", open: true, icon: <Icon w={48} h={42}><circle cx="26" cy="21" r="21" fill="#d35230" /><path d="M26 0a21 21 0 0 1 21 21H26z" fill="#ff8f6b" /><path d="M26 0a21 21 0 0 0-21 21h21z" fill="#ed6c47" /><rect y="9" width="24" height="24" rx="2" fill="#c43e1c" /><Letter>P</Letter></Icon> },
  { name: "Epic", open: true, bg: "#4b4b4b", icon: <EpicTile>Epic</EpicTile> },
  { name: "Snipping Tool", open: true, icon: (
    <Icon w={38} h={48}>
      <path d="M4 30C-1 18 2 4 8 3M4 5C16-2 30 2 33 13c2 9 0 17-8 20" stroke="#d83b01" strokeWidth="5" />
      <path d="M17 4v31l4-3V4zM32 14L14 33l4 3 16-18z" fill="#c9c9c9" />
      <circle cx="7" cy="35" r="4.500" stroke="#1f8fe0" strokeWidth="3" /><circle cx="20" cy="41" r="4.500" stroke="#1f8fe0" strokeWidth="3" />
    </Icon>) },
];

const menu: [string, React.ReactNode][] = [
  ["Home", <HomeIcon />],
  ["Schedule", <CalendarIcon c="#fff" top="#d3f5df" />],
  ["In Basket", <InBasketIcon tray="#ffd95a" line="#fff" />],
  ["Chart", <FolderIcon />],
  ["DAR - DeptAppts", <ClipIcon frame="#f5b86a" clip="#bfe6fb" line="#fff" paper="#5b1a2a" />],
  ["Encounter", <StethIcon a="#fff" b="#7fc1ef" />],
  ["Telephone Call", <PhoneIcon />],
  ["Patient Lists", <PeopleListIcon a="#bfe6fb" b="#fff" />],
  ["Appts", <ApptsIcon />],
];

const tasks = [
  { name: "Figure out what increases your blood pressure", desc: "1 article to read", date: "08/22/2023" },
  { name: "Learn how to take your blood pressure at home", desc: "2 articles to read and 1 video to watch", date: "08/24/2023" },
  { name: "Eat smart for your blood pressure and weight", desc: "2 articles to read and 3 videos to watch", date: "08/26/2023" },
  { name: "Get on board with a low-sodium life", desc: "2 articles to read and 1 video to watch", date: "08/28/2023" },
  { name: "Recognize the warning signs of blood pressure", desc: "", date: "09/01/2023" },
];

const Fact = ({ k, v }: { k: string; v: string }) => <div><Key>{k}:</Key> {v}</div>;

function PatientSidebar() {
  return (
    <Sidebar>
      <SideScroll>
        <Head>
          <NotesIcon />
          <Avatar>TA</Avatar>
          <HeadActions>
            <RoundButton aria-label="New message"><NewMailIcon /></RoundButton>
            <RoundButton aria-label="Portal active"><MonitorIcon /></RoundButton>
            <RoundButton aria-label="Patient checks"><PatientChecksIcon /></RoundButton>
          </HeadActions>
        </Head>
        <PatientName>Test I. Ann</PatientName>
        <Demographics>
          <Wrapped $lh={31} $bottom={3}>Female, 36 year old, 8/17/1987 <CakeIcon /></Wrapped>
          <Fact k="MRN" v="4000063246" />
          <Fact k="Phone" v="212-555-5555" />
          <Wrapped $lh={29} $top={4} $bottom={4}><Key>Code:</Key> Not on File<br />(no Advance Directives on File)</Wrapped>
          <Fact k="Pharmacy" v="None" />
        </Demographics>
        <SearchBox aria-label="Search chart">
          <Magnifier c="#c3c7cc" w={28} flip />
          <input type="text" placeholder="Search" />
        </SearchBox>
        <FirstSection><Fact k="Care Team" v="No PCP" /><Fact k="Coverage" v="None" /></FirstSection>
        <Allergy>Allergies: <b>Not on File</b></Allergy>
        <FirstSection><Fact k="ACO Status" v="No" /><Fact k="Pain Agreement" v="Not on File" /></FirstSection>
        <Section>No treatment team</Section>
        <Section><SideLink href="#" $c="#0b6f74">8/17 PATIENT OUTREACH</SideLink></Section>
        <Section><Fact k="Ht" v="—" /><Fact k="Weight" v="—" /><Fact k="BMI" v="—" /></Section>
        <Section $tight>
          <SideLink href="#" $c="#1a3fe0">LAST SURGERY</SideLink>
          <IconRow><IconSlot><ShortcutIcon /></IconSlot>See Surgical History</IconRow>
        </Section>
        <Section $tight>
          <SideLink href="#" $c="#1a3fe0">LAST 3YR</SideLink>
          <IconRow><IconSlot><StethIcon a={SLATE} b={SLATE} /></IconSlot>No visits</IconRow>
          <IconRow><IconSlot><FlaskIcon c={SLATE} w={28} /></IconSlot>No results</IconRow>
        </Section>
        <Section><SideLink href="#" $c="#b01d86">UROLOGY PROBLEMS (0)</SideLink></Section>
        <MoreShade aria-label="Show more"><Caret c="#4d3560" w={22} /></MoreShade>
      </SideScroll>
      <SideFoot><StartReview>Start Review</StartReview></SideFoot>
    </Sidebar>
  );
}

function TaskTable() {
  return (
    <Tasks>
      <thead>
        <tr>
          <HeadCell scope="col" $w={184}><HeadText><SortMark $x={73}><SortArrow />1</SortMark></HeadText></HeadCell>
          <HeadCell scope="col" $w={611}><HeadText>Name</HeadText></HeadCell>
          <HeadCell scope="col" $w={63} aria-label="Reminder" />
          <HeadCell scope="col" $w={305}><HeadText>Frequency</HeadText></HeadCell>
          <HeadCell scope="col" $w={308}><HeadText>Next Due Date<SortMark $x={132}><SortArrow />2</SortMark></HeadText></HeadCell>
          <HeadCell scope="col"><HeadText>End Date</HeadText></HeadCell>
          <HeadCell scope="col" $w={54} aria-label="Remove" />
        </tr>
      </thead>
      <tbody>
        <tr><td colSpan={7}><GroupLabel>Current</GroupLabel></td></tr>
        {tasks.map(t => (
          <React.Fragment key={t.name}>
            <MainRow $tall={!t.desc}>
              <td><BookIcon /></td>
              <td><TaskLink href="#">{t.name}{!t.desc && <><br />&nbsp;</>}</TaskLink></td>
              <BellCell><FaBell size={26} /></BellCell>
              <td>Once</td>
              <td>{t.date}</td>
              <td>{t.date}</td>
              <td><Bare aria-label="Remove task"><Cross c="#667b8a" w={24} /></Bare></td>
            </MainRow>
            {t.desc && (
              <tr>
                <DetailCell />
                <DetailCell colSpan={6}>
                  <DetailLine><span>Display Name:</span>{t.name}</DetailLine>
                  <DetailLine><span>Description:</span>{t.desc}</DetailLine>
                  <Preview href="#"><PreviewIcon lens="#4a93b8" />Preview Education</Preview>
                </DetailCell>
              </tr>
            )}
          </React.Fragment>
        ))}
      </tbody>
    </Tasks>
  );
}

export default function App() {
  return (
    <Shell>
      <GlobalStyle />
      <TitleBar>
        <EMark>E</EMark>
        Hyperspace - HIP 11 COL UROLOGY - Hosted POC Environment - PHYSICIAN FAMILY MEDICINE
        <Grow />
        <Badge><FlaskIcon c="#fff" />48</Badge>
        <MailBadge><MailIcon c="#fff" hole="#e87400" w={24} />21<BadgeText>Patient Clinical Update</BadgeText></MailBadge>
        <Counter><GobletIcon />8</Counter>
        <Counter><MailIcon c="#111" hole="#fff" />2938</Counter>
        <Caret c="#111" />
        <WindowButtons>
          <WindowButton aria-label="Minimize"><Icon w={20} h={2}><path d="M0 1h20" stroke="#111" strokeWidth="2" /></Icon></WindowButton>
          <WindowButton aria-label="Restore"><Icon w={20} h={20}><path d="M1 5h14v14H1zM5 5V1h14v14h-4" stroke="#111" strokeWidth="2" /></Icon></WindowButton>
          <WindowButton aria-label="Close"><Icon w={20} h={20}><path d="M1 1l18 18M19 1L1 19" stroke="#111" strokeWidth="2" /></Icon></WindowButton>
        </WindowButtons>
      </TitleBar>

      <MenuBar>
        <EpicButton>Epic<Caret c="#ecb8cc" w={18} /></EpicButton>
        {menu.map(([label, icon]) => (
          <MenuItem key={label}><MenuIcon>{icon}</MenuIcon>{label}</MenuItem>
        ))}
        <Tools>
          <ToolItem aria-label="More"><ChevronsIcon /></ToolItem>
          <ToolItem aria-label="Personalize"><FaWrench size={25} /></ToolItem>
          <ToolItem aria-label="Web"><GlobeIcon /></ToolItem>
          <ToolItem aria-label="Remind me"><SunIcon /></ToolItem>
          <ToolItem $dim><PrinterIcon />Print<Caret c="#fff" w={10} /></ToolItem>
          <ToolItem><HelpMailIcon />Epic Help</ToolItem>
          <ToolItem><LockIcon />Secure</ToolItem>
          <ToolItem><LogOutIcon />Log Out<Caret c="#fff" w={10} /></ToolItem>
          <ToolItem aria-label="Dictate"><MicIcon /></ToolItem>
        </Tools>
      </MenuBar>

      <WorkTabs>
        <IconTab aria-label="Schedule"><CalendarIcon c={SLATE} top="#2f7d4b" /></IconTab>
        <IconTab aria-label="Patient lists"><PeopleListIcon a="#2b7ba5" b={SLATE} /></IconTab>
        <IconTab aria-label="Reports"><ReportIcon /></IconTab>
        <IconTab aria-label="In Basket"><InBasketIcon tray="#f2a900" line={SLATE} /></IconTab>
        <IconTab aria-label="Secure chat"><ChatIcon /></IconTab>
        <PatientTab>Ann, Test Ingrid<Bare aria-label="Close workspace"><Cross c="#cda5d8" w={20} s={3} /></Bare></PatientTab>
        <Env>HOSTED POC ENVIRONME</Env>
        <Dept>PHYSICIAN FAMILY MEDICINE</Dept>
        <Ribbon>EpicCare</Ribbon>
        <SearchFlag aria-label="Search"><Magnifier c="#d9a0e6" w={42} /></SearchFlag>
      </WorkTabs>

      <Body>
        <PatientSidebar />
        <Main>
          <ActivityBar>
            <History>
              <button aria-label="Back"><Icon w={28} h={24}><path d="M14 1L3 12l11 11M3 12h25" stroke="#222" strokeWidth="3.400" /></Icon></button>
              <button aria-label="Forward"><Icon w={28} h={24}><path d="M14 1l11 11-11 11M0 12h25" stroke="#b095dc" strokeWidth="3.400" /></Icon></button>
            </History>
            <Tab $bar="#3399c7"><ChartDisc />Chart Review</Tab>
            <Tab $bar="#3399c7"><CallDisc />Call Initiation</Tab>
            <Tab $bar="#e8316b"><AssessDisc />Assessments</Tab>
            <Tab $bar="#e8316b"><AssessDisc />Care Mgmt</Tab>
            <PlainTab>Health Maintenance</PlainTab>
            <Tab $bar="#259a83"><WrapDisc />Wrap-Up</Tab>
            <ActiveTab>Patient To Do List</ActiveTab>
            <Grow />
            <SquareButton aria-label="More activities"><Caret c="#222" w={16} /></SquareButton>
            <SquareButton aria-label="Customize"><FaWrench size={25} /></SquareButton>
          </ActivityBar>
          <Panel>
            <PanelHead>
              <PanelTitle>Patient To Do List</PanelTitle>
              <HelpButton aria-label="Help">?</HelpButton>
              <Bare aria-label="Close activity"><Cross c={SLATE} w={26} s={6} /></Bare>
            </PanelHead>
            <Toolbar>
              <AddBox>
                <TextCursor />
                <input type="text" placeholder="Add reminders" aria-label="Add reminders" />
                <AddButton><Plus />Add</AddButton>
              </AddBox>
              <ShowFilter><span>Show:</span><input type="checkbox" />Past Tasks</ShowFilter>
              <ToolButton><ToolSlot><PreviewIcon lens={SLATE} /></ToolSlot><div>Patient <u>V</u>iew</div></ToolButton>
              <ToolButton><ToolSlot><Icon w={24} h={8}><path d="M0 0h24v8H0z" fill="#c44f30" /></Icon></ToolSlot><div>Re<u>m</u>ove All</div></ToolButton>
              <ToolButton $off disabled><ToolSlot><Plus c="#cbdcd2" /></ToolSlot><div>S<u>t</u>art All</div></ToolButton>
              <ToolButton><ToolSlot><RefreshIcon /></ToolSlot><div>Ref<u>r</u>esh</div></ToolButton>
              <Bare aria-label="Settings"><FaWrench size={24} /></Bare>
            </Toolbar>
            <Card>
              <TableClip><TaskTable /></TableClip>
              <Scrollbar>
                <ScrollArrow aria-label="Scroll up"><Icon w={22} h={18}><path d="M2 16L11 5l9 11" stroke="#3b3655" strokeWidth="5" /></Icon></ScrollArrow>
                <Thumb />
                <Grow />
                <ScrollArrow aria-label="Scroll down"><Icon w={22} h={18}><path d="M2 2l9 11 9-11" stroke="#3b3655" strokeWidth="5" /></Icon></ScrollArrow>
              </Scrollbar>
            </Card>
            <Actions>
              <Action $mr={32}><Plus />ADD ORDER</Action>
              <Action $mr={78} aria-label="Order list"><OrdersIcon /></Action>
              <Action><Plus />ADD DX (1)</Action>
              <Grow />
              <Action $snug $mr={66}><BarsIcon />LEVEL OF SERVICE</Action>
              <Action $mr={70}>2<ClipIcon frame="#8a5a20" clip="#2b7ba5" line="#2b7ba5" paper="#fff" /></Action>
              <Action $snug><CheckIcon />SIGN ENCOUNTER</Action>
            </Actions>
          </Panel>
        </Main>
        <Drawer aria-label="Open side panel"><Icon w={8} h={14}><path d="M8 0v14L0 7z" fill="#fff" /></Icon></Drawer>
      </Body>

      <Taskbar>
        <Apps>
          {apps.map(a => (
            <AppButton key={a.name} aria-label={a.name} $open={a.open} $bg={a.bg}>{a.icon}</AppButton>
          ))}
        </Apps>
        <Tray>
          <TrayItem $w={124} aria-label="Maintenance">
            <Icon w={44}><path d="M22 0l22 22-22 22L0 22z" fill="#f7a80c" /><circle cx="23" cy="14" r="3" fill="#3b3320" /><path d="M22 17l-5 8-3 6M21 20l5 6 3 5M15 19l9 6" stroke="#3b3320" strokeWidth="2.600" /><path d="M25 31h8l-4-6z" fill="#3b3320" /></Icon>
          </TrayItem>
          <TrayItem $w={62} aria-label="Hidden icons"><Icon w={24} h={14}><path d="M1 13L12 2l11 11" stroke="#fff" strokeWidth="2" /></Icon></TrayItem>
          <TrayItem $w={62} aria-label="OneDrive"><Icon w={32} h={20}><path d="M0 14q0-6 6-7 3-7 11-7 7 0 9 7 6 1 6 7 0 6-6 6H6q-6 0-6-6z" fill="#1187dc" /><path d="M6 7q3-7 11-7 7 0 9 7l-10 3z" fill="#0c5fb5" /><path d="M2 18l14-8 14 8q-2 2-4 2H6q-3 0-4-2z" fill="#35aef0" /></Icon></TrayItem>
          <TrayItem $w={66} aria-label="Battery"><Icon w={32} h={26}><path d="M1 2h26v18H1z" stroke="#fff" strokeWidth="2" /><path d="M4 5h12v12H4z" fill="#fff" /><circle cx="21" cy="17" r="8.500" fill="#139a22" /><path d="M21 11q6 7 0 10-6-3 0-10v13" stroke="#fff" strokeWidth="1.500" /></Icon></TrayItem>
          <TrayItem $w={60} aria-label="Microphone"><Icon w={22} h={32}><rect x="5" y="0" width="12" height="23" rx="3" fill="#fff" /><path d="M1 15v6q0 5 6 5h8q6 0 6-5v-6M11 26v5M6 31h10" stroke="#fff" strokeWidth="2" /></Icon></TrayItem>
          <TrayItem $w={66} aria-label="Wi-Fi"><Icon w={26} h={26}><path d="M1 25Q2 3 25 2M8 25q1-15 17-16M14 25q1-8 11-9" stroke="#ddd" strokeWidth="2" /><circle cx="21" cy="22" r="3.500" fill="#fff" /></Icon></TrayItem>
          <TrayItem $w={64} aria-label="Volume"><Icon w={32} h={28}><path d="M1 9h6l6-6v22l-6-6H1zM17 10q3 4 0 8M21 7q5 7 0 14" stroke="#fff" strokeWidth="2" /><path d="M25 3q8 11 0 22" stroke="#888" strokeWidth="2" /></Icon></TrayItem>
          <TrayItem $w={66} aria-label="Pen"><Icon w={32} h={32}><path d="M10 28l3-12L24 2l5 4-10 15zM8 18q-9 5-6 11 5 3 7-3M24 14q9-1 6 4l-5 4" stroke="#fff" strokeWidth="2" /></Icon></TrayItem>
          <Clock>3:33 PM<br />8/21/2023</Clock>
          <Notify aria-label="Notifications"><Icon w={34} h={30}><path d="M0 0h32v23H18l-6 6v-6H0z" fill="#fff" /><path d="M5 6h22M5 11h22M5 16h14" stroke="#1c1c1c" strokeWidth="2" /></Icon><span>5</span></Notify>
          <ShowDesktop />
        </Tray>
      </Taskbar>
    </Shell>
  );
}
